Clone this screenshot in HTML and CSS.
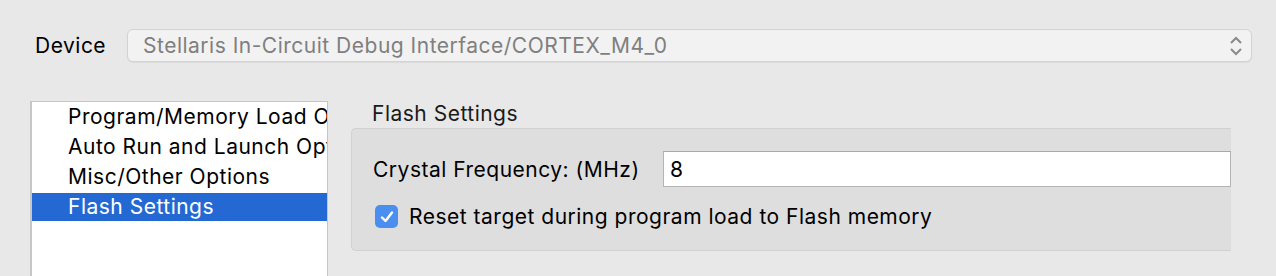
FILE: index.html
```html
<!DOCTYPE html>
<html lang="en">
<head>
  <meta charset="UTF-8">
  <title>Debug Properties</title>
  <link rel="stylesheet" href="styles.css">
</head>
<body>
  <div class="device-row">
    <label class="device-label">Device</label>
    <div class="select">
      <span class="select-text">Stellaris In-Circuit Debug Interface/CORTEX_M4_0</span>
      <svg class="chevrons" width="14" height="22" viewBox="0 0 14 22">
        <path d="M2 8 L7 3 L12 8" fill="none" stroke="#8a8a8a" stroke-width="2"/>
        <path d="M2 14 L7 19 L12 14" fill="none" stroke="#8a8a8a" stroke-width="2"/>
      </svg>
    </div>
  </div>

  <div class="main">
    <ul class="categories">
      <li>Program/Memory Load Options</li>
      <li>Auto Run and Launch Options</li>
      <li>Misc/Other Options</li>
      <li class="selected">Flash Settings</li>
    </ul>

    <div class="panel">
      <div class="panel-title">Flash Settings</div>
      <div class="group">
        <div class="field">
          <span class="field-label">Crystal Frequency: (MHz)</span>
          <input class="field-input" type="text" value="8">
        </div>
        <div class="check-row">
          <span class="checkbox">
            <svg width="16" height="16" viewBox="0 0 16 16">
              <path d="M3 8.5 L6.5 12 L13 3.5" fill="none" stroke="#fff" stroke-width="2.4" stroke-linecap="round" stroke-linejoin="round"/>
            </svg>
          </span>
          <span class="check-label">Reset target during program load to Flash memory</span>
        </div>
      </div>
    </div>
  </div>
</body>
</html>
```

FILE: styles.css
```css
body {
  margin: 0;
  background: #e8e8e8;
  font-family: Inter, "Liberation Sans", sans-serif;
  font-size: 21px;
  letter-spacing: 0.5px;
  color: #1a1a1a;
  overflow: hidden;
  height: 276px;
}

.device-row {
  display: flex;
  align-items: center;
  padding: 29px 24px 0 35px;
}

.device-label {
  width: 92px;
  color: #000;
}

.select {
  flex: 1;
  height: 31px;
  display: flex;
  align-items: center;
  justify-content: space-between;
  background: #f2f2f2;
  border: 1px solid #d3d3d3;
  border-radius: 6px;
  box-shadow: 0 1px 1px rgba(0, 0, 0, 0.06);
  padding: 0 8px 0 15px;
}

.select-text {
  color: #7f7f7f;
}

.main {
  display: flex;
  gap: 23px;
  padding: 39px 0 0 30px;
}

.categories {
  list-style: none;
  margin: 0;
  padding: 1px 0 0 0;
  width: 295px;
  height: 174px;
  overflow: hidden;
  background: #fff;
  border: 1px solid #c6c6c6;
  border-left-width: 2px;
  border-bottom: none;
  display: flex;
  flex-direction: column;
  gap: 2px;
}

.categories li {
  height: 28px;
  line-height: 28px;
  padding-left: 36px;
  white-space: nowrap;
  overflow: hidden;
  color: #000;
}

.categories li.selected {
  background: #2469d3;
  color: #fff;
}

.panel {
  width: 880px;
}

.panel-title {
  padding-left: 21px;
  height: 27px;
  line-height: 26px;
}

.group {
  background: #dedede;
  border: 1px solid #d1d1d1;
  border-right: none;
  border-radius: 5px 0 0 5px;
  padding: 22px 0 21px 21px;
}

.field {
  display: flex;
  align-items: center;
}

.field-label {
  width: 290px;
  color: #000;
}

.field-input {
  flex: 1;
  box-sizing: border-box;
  height: 36px;
  border: 1px solid #b4b4b4;
  border-top-color: #a9a9a9;
  background: #fff;
  font-family: inherit;
  font-size: 21px;
  padding: 0 6px;
  outline: none;
  color: #000;
}

.check-row {
  display: flex;
  align-items: center;
  margin-top: 17px;
  gap: 11px;
}

.checkbox {
  width: 23px;
  height: 23px;
  margin-left: 2px;
  border-radius: 5px;
  background: #4a8ff0;
  display: flex;
  align-items: center;
  justify-content: center;
}

.check-label {
  color: #000;
}
```
